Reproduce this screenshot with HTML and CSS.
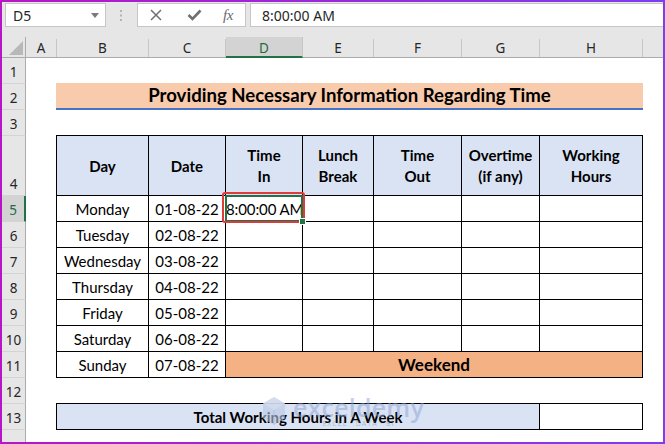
FILE: index.html
```html
<!DOCTYPE html>
<html>
<head>
<meta charset="utf-8">
<link rel="stylesheet" href="styles.css">
</head>
<body>
<div class="frame">
  <div class="toolbar">
    <div class="namebox">
      <span>D5</span>
      <svg class="dd" width="8" height="5" viewBox="0 0 8 5"><polygon points="0,0 8,0 4,5" fill="#7a7a7a"/></svg>
    </div>
    <div class="grip">
      <svg width="3" height="11" viewBox="0 0 3 11"><rect x="0" y="0" width="2" height="2" fill="#b4b4b4"/><rect x="0" y="4.5" width="2" height="2" fill="#b4b4b4"/><rect x="0" y="9" width="2" height="2" fill="#b4b4b4"/></svg>
    </div>
    <div class="fxbox">
      <svg class="ic-x" width="12" height="12" viewBox="0 0 12 12"><path d="M1 1 L11 11 M11 1 L1 11" stroke="#707070" stroke-width="1.5" fill="none"/></svg>
      <svg class="ic-ok" width="15" height="12" viewBox="0 0 15 12"><path d="M1.5 6 L5.5 10 L13.5 1.5" stroke="#707070" stroke-width="2.6" fill="none"/></svg>
      <span class="fx">fx</span>
    </div>
    <div class="formula">8:00:00 AM</div>
  </div>

  <div class="colheads">
    <div class="corner"><svg width="14" height="14" viewBox="0 0 14 14"><polygon points="14,0 14,14 0,14" fill="#b8b8b8"/></svg></div>
    <div class="ch w-a">A</div>
    <div class="ch w-b">B</div>
    <div class="ch w-c">C</div>
    <div class="ch w-d sel">D</div>
    <div class="ch w-e">E</div>
    <div class="ch w-f">F</div>
    <div class="ch w-g">G</div>
    <div class="ch w-h">H</div>
    <div class="ch w-i"></div>
  </div>

  <div class="sheet">
    <div class="rowheads">
      <div class="rh">1</div>
      <div class="rh">2</div>
      <div class="rh">3</div>
      <div class="rh tall">4</div>
      <div class="rh sel">5</div>
      <div class="rh">6</div>
      <div class="rh">7</div>
      <div class="rh">8</div>
      <div class="rh">9</div>
      <div class="rh">10</div>
      <div class="rh">11</div>
      <div class="rh">12</div>
      <div class="rh">13</div>
      <div class="rh"></div>
    </div>

    <div class="cells">
      <div class="spacer"></div>
      <div class="title">Providing Necessary Information Regarding Time</div>
      <div class="spacer"></div>

      <div class="tbl">
        <div class="hd">Day</div>
        <div class="hd">Date</div>
        <div class="hd">Time<br>In</div>
        <div class="hd">Lunch<br>Break</div>
        <div class="hd">Time<br>Out</div>
        <div class="hd">Overtime<br>(if any)</div>
        <div class="hd">Working<br>Hours</div>

        <div class="td">Monday</div><div class="td">01-08-22</div>
        <div class="td active">8:00:00 AM<span class="sel-green"></span><span class="sel-red"></span><span class="handle"></span></div>
        <div class="td"></div><div class="td"></div><div class="td"></div><div class="td"></div>

        <div class="td">Tuesday</div><div class="td">02-08-22</div>
        <div class="td"></div><div class="td"></div><div class="td"></div><div class="td"></div><div class="td"></div>

        <div class="td">Wednesday</div><div class="td">03-08-22</div>
        <div class="td"></div><div class="td"></div><div class="td"></div><div class="td"></div><div class="td"></div>

        <div class="td">Thursday</div><div class="td">04-08-22</div>
        <div class="td"></div><div class="td"></div><div class="td"></div><div class="td"></div><div class="td"></div>

        <div class="td">Friday</div><div class="td">05-08-22</div>
        <div class="td"></div><div class="td"></div><div class="td"></div><div class="td"></div><div class="td"></div>

        <div class="td">Saturday</div><div class="td">06-08-22</div>
        <div class="td"></div><div class="td"></div><div class="td"></div><div class="td"></div><div class="td"></div>

        <div class="td">Sunday</div><div class="td">07-08-22</div>
        <div class="td weekend">Weekend</div>
      </div>

      <div class="spacer"></div>

      <div class="total">
        <div class="tl">Total Working Hours in A Week</div>
        <div class="tv"></div>
      </div>
    </div>

    <div class="watermark">
      <svg class="wm-logo" width="24" height="30" viewBox="0 0 24 30">
        <path d="M12 1 L23 7.5 L23 22.5 L12 29 L1 22.5 L1 7.5 Z" fill="#b9c6e2" opacity="0.6"/>
        <path d="M12 1 L23 7.5 L12 14 L1 7.5 Z" fill="#d4dcee" opacity="0.8"/>
        <path d="M12 14 L12 29" stroke="#a9b8d8" stroke-width="1" opacity="0.7"/>
      </svg>
      <div class="wm-text">
        <div class="wm-name">exceldemy</div>
        <div class="wm-sub">EXCEL · DATA · BI</div>
      </div>
    </div>
  </div>
</div>
</body>
</html>
```

FILE: styles.css
```css
* { box-sizing: border-box; }

body {
  margin: 0;
  background: #ffffff;
  font-family: "Lato", "Liberation Sans", sans-serif;
}

.frame {
  width: 665px;
  height: 444px;
  border: 2px solid #9a2ad8;
  border-image: linear-gradient(90deg, #b616c6, #7c3ef0) 1;
  background: #e6e6e6;
  display: flex;
  flex-direction: column;
  overflow: hidden;
  position: relative;
}

/* ---------- formula bar ---------- */
.toolbar {
  height: 35px;
  flex: none;
  display: flex;
  align-items: flex-start;
  padding: 1px 0 0 3px;
  font-family: "Noto Sans", "Open Sans", sans-serif;
  font-size: 14px;
  color: #262626;
}

.namebox {
  width: 101px;
  height: 24px;
  background: #fff;
  border: 1px solid #c6c6c6;
  display: flex;
  align-items: center;
  justify-content: space-between;
  padding: 0 6px 0 7px;
}

.grip {
  width: 31px;
  height: 24px;
  display: flex;
  align-items: center;
  justify-content: center;
}

.fxbox {
  width: 109px;
  height: 24px;
  background: #fff;
  border: 1px solid #c6c6c6;
  display: flex;
  align-items: center;
  padding-left: 12px;
}

.ic-ok { margin-left: 25px; }

.fx {
  margin-left: 21px;
  font-family: "Liberation Serif", "DejaVu Serif", serif;
  font-style: italic;
  font-size: 15px;
  color: #6a6a6a;
  letter-spacing: -0.5px;
}

.formula {
  flex: 1;
  height: 24px;
  margin-left: 4px;
  background: #fff;
  border: 1px solid #c6c6c6;
  border-right: none;
  display: flex;
  align-items: center;
  padding-left: 11px;
}

/* ---------- column headers ---------- */
.colheads {
  height: 21px;
  flex: none;
  display: flex;
  border-bottom: 1px solid #ababab;
  font-family: "Noto Sans", "Open Sans", sans-serif;
  font-size: 13.5px;
  color: #262626;
}

.corner {
  width: 24px;
  border-right: 1px solid #ababab;
  display: flex;
  align-items: flex-end;
  justify-content: flex-end;
  padding: 0 2px 2px 0;
}

.ch {
  display: flex;
  align-items: center;
  justify-content: center;
  border-right: 1px solid #c6c6c6;
  margin-top: 2px;
}

.ch.sel {
  background: #d3d3d3;
  color: #1e6b3e;
  border-bottom: 2px solid #217346;
  margin-top: 0;
  padding-top: 2px;
  margin-bottom: -1px;
}

.w-a { width: 31px; }
.w-b { width: 92px; }
.w-c { width: 77px; }
.w-d { width: 77px; }
.w-e { width: 71px; }
.w-f { width: 88px; }
.w-g { width: 78px; }
.w-h { width: 103px; }
.w-i { flex: 1; border-right: none; }

/* ---------- sheet ---------- */
.sheet {
  flex: 1;
  display: flex;
  position: relative;
  overflow: hidden;
}

.rowheads {
  width: 24px;
  flex: none;
  display: flex;
  flex-direction: column;
  font-family: "Noto Sans", "Open Sans", sans-serif;
  font-size: 13.5px;
  color: #262626;
}

.rh {
  height: 26px;
  flex: none;
  border-bottom: 1px solid #d4d4d4;
  border-right: 1px solid #ababab;
  display: flex;
  align-items: flex-end;
  justify-content: center;
  padding-bottom: 1px;
  line-height: 20px;
}

.rh.tall { height: 60px; }

.rh.sel {
  background: #d3d3d3;
  color: #1e6b3e;
  border-right: 2px solid #217346;
}

.cells {
  flex: 1;
  background: #fff;
  padding-left: 30px;
  display: flex;
  flex-direction: column;
  font-size: 15px;
  color: #000;
}

.spacer { height: 25px; flex: none; }

.title {
  width: 587px;
  height: 27px;
  flex: none;
  background: #f8cbad;
  border-bottom: 2px solid #4472c4;
  text-align: center;
  font-weight: 700;
  font-size: 18.6px;
  line-height: 25px;
}

.tbl {
  width: 587px;
  flex: none;
  display: grid;
  grid-template-columns: 91px 76px 76px 70px 87px 77px 102px;
  grid-template-rows: 59px repeat(7, 25px);
  gap: 1px;
  padding: 1px;
  background: #000;
}

.hd {
  background: #dae3f3;
  font-weight: 700;
  display: flex;
  align-items: center;
  justify-content: center;
  text-align: center;
  line-height: 21px;
  padding-top: 1px;
}

.td {
  background: #fff;
  display: flex;
  align-items: center;
  justify-content: center;
  line-height: 20px;
  padding-top: 1px;
}

.td.active {
  justify-content: flex-start;
  position: relative;
  white-space: nowrap;
  letter-spacing: -0.1px;
}

.sel-green {
  position: absolute;
  left: -1px;
  top: -1px;
  width: 78px;
  height: 27px;
  border: 2px solid #217346;
}

.sel-red {
  position: absolute;
  left: -4px;
  top: -4px;
  width: 83px;
  height: 31px;
  border: 2px solid #e0393e;
  border-radius: 3px;
}

.handle {
  position: absolute;
  right: -3px;
  bottom: -3px;
  width: 5px;
  height: 5px;
  background: #217346;
  outline: 1px solid #fff;
}

.weekend {
  grid-column: 3 / 8;
  background: #f4b183;
  font-weight: 700;
  font-size: 17px;
}

.total {
  width: 587px;
  height: 27px;
  flex: none;
  display: grid;
  grid-template-columns: 482px 102px;
  gap: 1px;
  padding: 1px;
  background: #000;
}

.tl {
  background: #dae3f3;
  font-weight: 700;
  display: flex;
  align-items: center;
  justify-content: center;
  padding-top: 1px;
}

.tv { background: #fff; }

/* ---------- watermark ---------- */
.watermark {
  position: absolute;
  left: 260px;
  top: 336px;
  display: flex;
  align-items: flex-start;
  gap: 7px;
  pointer-events: none;
}

.wm-logo { margin-top: 2px; }

.wm-text {
  display: flex;
  flex-direction: column;
  align-items: center;
}

.wm-name {
  font-family: "Open Sans", "Noto Sans", sans-serif;
  font-size: 25px;
  font-weight: 600;
  line-height: 26px;
  color: rgba(140, 162, 212, 0.5);
  letter-spacing: 0.2px;
}

.wm-sub {
  font-family: "Open Sans", "Noto Sans", sans-serif;
  font-size: 7px;
  line-height: 8px;
  letter-spacing: 1px;
  color: rgba(110, 120, 140, 0.45);
}
```
